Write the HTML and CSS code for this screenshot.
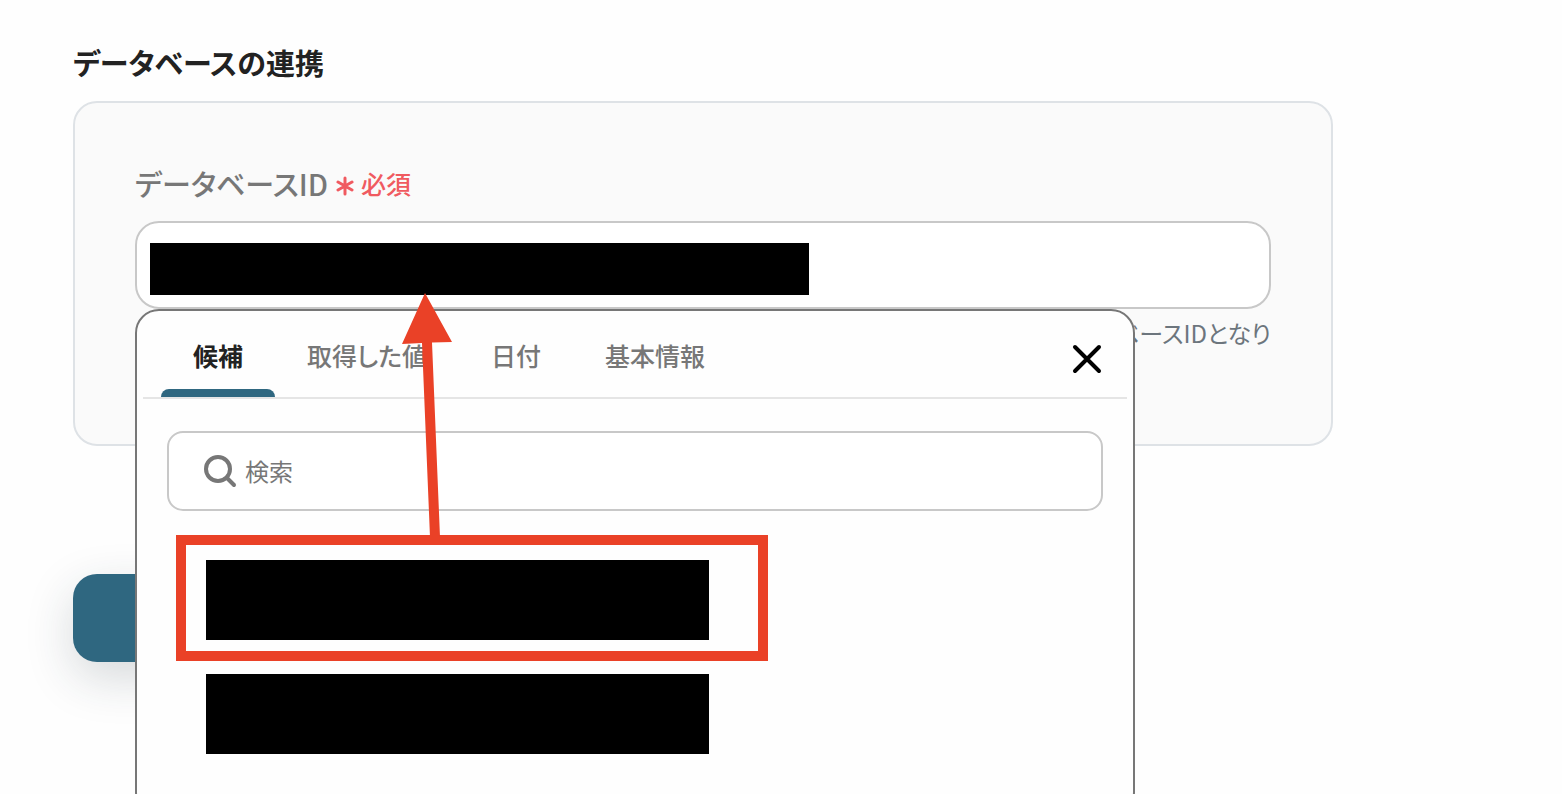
FILE: index.html
```html
<!DOCTYPE html>
<html lang="ja">
<head>
    <meta charset="UTF-8">
    <title>データベースの連携</title>

    <link rel="stylesheet" href="styles.css">
</head>
<body>

<main class="page">
    <h2 class="title">データベースの連携</h2>

    <section class="card">
        <div class="label-row">
            <label for="databaseId">データベースID</label>
            <span class="required">
                <svg width="18" height="20" viewBox="0 0 18 20"><path d="M9 2V18M2 6L16 14M16 6L2 14"/></svg>
                必須
            </span>
        </div>

        <div class="field">
            <input id="databaseId" class="field-input" type="text">
            <span class="mask field-mask"></span>

            <div class="popup">
                <div class="tabs">
                    <button class="tab active" type="button">候補</button>
                    <button class="tab" type="button">取得した値</button>
                    <button class="tab" type="button">日付</button>
                    <button class="tab" type="button">基本情報</button>
                    <button class="close" type="button" aria-label="閉じる">
                        <svg width="32" height="32" viewBox="0 0 32 32"><path d="M4 4L28 28M28 4L4 28"/></svg>
                    </button>
                </div>

                <label class="search">
                    <svg width="34" height="34" viewBox="0 0 34 34"><circle cx="15" cy="15" r="12"/><path d="M24 24L31 31"/></svg>
                    <input type="text" placeholder="検索" aria-label="検索">
                </label>

                <ul class="list">
                    <li><button class="mask item" type="button" aria-label="候補1"></button></li>
                    <li><button class="mask item" type="button" aria-label="候補2"></button></li>
                </ul>

                <!-- どの候補を選ぶかを示す枠と矢印 -->
                <div class="frame"></div>
                <svg class="arrow" width="60" height="250" viewBox="0 0 60 250">
                    <path d="M27 0L54 49L34 49.500L42 244H32L24 50L4 51Z"/>
                </svg>
            </div>
        </div>

        <p class="help">ベースIDとなり</p>
    </section>

    <button class="save" type="button">保存</button>
</main>

</body>
</html>
```

FILE: styles.css
```css
* {
    box-sizing: border-box;
}

body {
    margin: 0;
    background: #fefefe;
    color: #222;
    font-family: "Noto Sans CJK JP", sans-serif;
    font-feature-settings: "palt";
    font-size: 24px;
    line-height: 36px;
}

button,
input {
    font: inherit;
    font-feature-settings: inherit;
}

.page {
    height: 100vh;
    padding: 42px 73px 0;
    overflow: hidden;
}

.title {
    margin: 0 0 19px;
    font-size: 29px;
    line-height: 40px;
    font-weight: 700;
}

.card {
    max-width: 1260px;
    padding: 60px 60px 93px;
    border: 2px solid #dee2e6;
    border-radius: 24px;
    background: #fafafa;
}

.label-row {
    display: flex;
    align-items: center;
    gap: 8px;
    margin-bottom: 18px;
    color: #777;
    font-size: 29px;
    line-height: 40px;
    font-weight: 500;
}

.required {
    display: flex;
    align-items: center;
    gap: 7px;
    color: #f05a60;
    font-size: 25px;
}

svg {
    display: block;
    fill: none;
    stroke: currentColor;
    stroke-linecap: round;
}

.required svg {
    margin-top: 6px;
    stroke-width: 3;
}

.field {
    position: relative;
}

.field-input {
    display: block;
    width: 100%;
    height: 88px;
    padding: 0 24px;
    border: 2px solid #c8c8c8;
    border-radius: 24px;
    background: #fff;
}

.mask {
    background: #000;
}

.field-mask {
    position: absolute;
    top: 22px;
    left: 15px;
    width: 58%;
    height: 52px;
}

.help {
    margin: 6px 0 0;
    color: #6c757d;
    text-align: right;
}

.popup {
    position: absolute;
    z-index: 1;
    top: 100%;
    left: 0;
    width: 88%;
    padding: 0 6px 60px;
    border: 2px solid #777;
    border-radius: 24px;
    background: #fefefe;
}

.tabs {
    display: flex;
    height: 88px;
    padding: 0 18px;
    border-bottom: 2px solid #e5e5e5;
}

.tab {
    position: relative;
    padding: 2px 32px 0;
    border: none;
    background: none;
    color: #777;
    font-size: 25px;
    font-weight: 500;
    cursor: pointer;
}

.tab.active {
    color: #222;
    font-weight: 700;
}

.tab.active::after {
    content: "";
    position: absolute;
    right: 0;
    bottom: 0;
    left: 0;
    height: 8px;
    border-radius: 8px 8px 0 0;
    background: #2f6780;
}

.close {
    margin-left: auto;
    padding: 10px 6px 0;
    border: none;
    background: none;
    color: #000;
    cursor: pointer;
}

.close svg {
    stroke-width: 4;
}

.search {
    display: flex;
    align-items: center;
    gap: 8px;
    height: 80px;
    margin: 32px 24px 0;
    padding: 0 34px;
    border: 2px solid #c8c8c8;
    border-radius: 16px;
    background: #fff;
    color: #777;
}

.search svg {
    stroke-width: 4;
}

.search input {
    flex: 1;
    padding: 0;
    border: none;
    outline: none;
    background: none;
}

.search input::placeholder {
    color: #777;
}

.list {
    display: grid;
    gap: 34px;
    margin: 49px 0 0;
    padding: 0 63px;
    list-style: none;
}

.item {
    display: block;
    width: 503px;
    max-width: 100%;
    height: 80px;
    border: none;
}

.frame {
    position: absolute;
    top: 224px;
    left: 39px;
    width: 592px;
    height: 126px;
    border: 10px solid #ea4127;
}

.arrow {
    position: absolute;
    top: -18px;
    left: 261px;
    fill: #ea4127;
    stroke: none;
}

.save {
    display: block;
    width: 240px;
    height: 88px;
    margin-top: 128px;
    border: none;
    border-radius: 24px;
    background: #2f6780;
    box-shadow: 0 16px 48px rgba(33, 50, 60, 0.18);
    color: #fff;
    cursor: pointer;
}
```
